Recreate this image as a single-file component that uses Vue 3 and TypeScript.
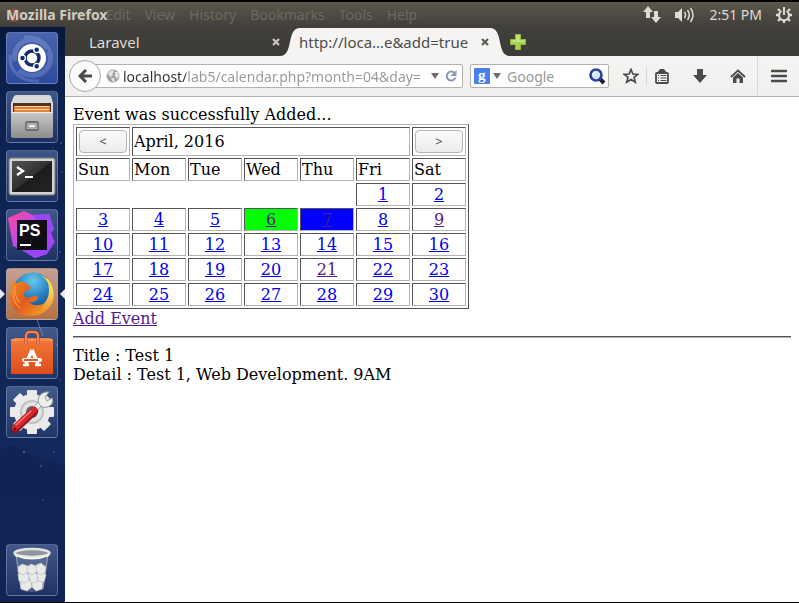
<script setup lang="ts">
import { ref } from 'vue'

interface Day {
  n: number
  visited?: boolean
  mark?: 'today' | 'event'
}

const menus: string[] = ['File', 'Edit', 'View', 'History', 'Bookmarks', 'Tools', 'Help']
const weekdays: string[] = ['Sun', 'Mon', 'Tue', 'Wed', 'Thu', 'Fri', 'Sat']

const day = (n: number): Day => ({
  n,
  visited: [6, 7, 9, 21].includes(n),
  mark: n === 6 ? 'today' : n === 7 ? 'event' : undefined,
})
const firstWeek: Day[] = [1, 2].map(day)
const weeks: Day[][] = [3, 10, 17, 24].map((s) => Array.from({ length: 7 }, (_, i) => day(s + i)))

const address = ref('localhost/lab5/calendar.php?month=04&day=')
const query = ref('')
</script>

<template>
  <div class="desktop">
    <header class="panel">
      <nav class="menus">
        <span class="ghost"></span>
        <a v-for="m in menus" :key="m" href="#" :class="{ under: m === 'File' }">{{ m }}</a>
      </nav>
      <strong class="app-title">Mozilla Firefox</strong>
      <div class="indicators">
        <svg width="18" height="17" viewBox="0 0 18 17" fill="#dfdbd2">
          <path d="M5 0 10 6H7V12H3V6H0ZM11 5H15V11H18L13 17 8 11H11Z" />
        </svg>
        <svg width="20" height="16" viewBox="0 0 20 16" fill="none" stroke="#dfdbd2" stroke-width="1.5">
          <path d="M0 5H3L7 1V15L3 11H0Z" fill="#dfdbd2" stroke="none" />
          <path d="M9.500 5Q11.500 8 9.500 11M12.500 3Q16 8 12.500 13M15.500 1Q20.500 8 15.500 15" />
        </svg>
        <time>2:51 PM</time>
        <svg width="16" height="16" viewBox="0 0 16 16" fill="none" stroke="#dfdbd2">
          <path d="M5.500 4A5 5 0 1 0 10.500 4" stroke-width="2" />
          <path d="M8 0V8" stroke-width="2" />
          <path d="M2 2 4 4M14 2 12 4M0 8H3M16 8H13M2 14 4 12M14 14 12 12M8 13V16" stroke-width="2.400" />
        </svg>
      </div>
    </header>

    <div class="workspace">
      <aside class="launcher">
        <svg class="stars" viewBox="0 0 65 575" preserveAspectRatio="none" aria-hidden="true">
          <path d="M0 425Q8 416 18 421T40 432L65 439V575H0Z" fill="#101f4d" opacity=".6" />
          <path d="M36 290 43 309" stroke="#8ba0d0" opacity=".6" />
          <g fill="#9db2e2" opacity=".6">
            <circle cx="61" cy="116" r=".8" /><circle cx="53" cy="121" r=".6" /><circle cx="62" cy="145" r=".7" />
            <circle cx="60" cy="225" r=".7" /><circle cx="4" cy="230" r=".5" /><circle cx="57" cy="318" r=".8" />
            <circle cx="60" cy="353" r=".6" /><circle cx="24" cy="425" r=".9" /><circle cx="54" cy="425" r=".7" />
            <circle cx="41" cy="439" r=".8" /><circle cx="43" cy="473" r=".6" />
          </g>
        </svg>

        <button class="tile dash" aria-label="Dash">
          <svg viewBox="0 0 52 52">
            <g fill="none" stroke="#c3d0ff" opacity=".22" stroke-width="5">
              <path d="M9 29C5 8 31 0 42 17M43 20C50 39 27 51 13 38" />
              <path d="M18 5C35 3 49 16 44 32M33 49C18 50 3 42 4 23" stroke-width="3" />
            </g>
            <circle cx="26" cy="26" r="14" fill="#fff" />
            <circle cx="26" cy="26" r="7" fill="none" stroke="#142c6c" stroke-width="3.500" />
            <g fill="#142c6c" stroke="#fff" stroke-width="1.300">
              <circle cx="16.500" cy="26" r="2.900" /><circle cx="30.700" cy="17.800" r="2.900" /><circle cx="30.700" cy="34.200" r="2.900" />
            </g>
          </svg>
        </button>

        <button class="tile" aria-label="Files">
          <svg viewBox="0 0 52 52">
            <defs>
              <linearGradient id="cab" x2="0" y2="1"><stop stop-color="#c9c9c9" /><stop offset="1" stop-color="#8d8d8d" /></linearGradient>
            </defs>
            <path d="M5 12 8 5Q9 4 11 4H42Q44 4 45 5L47 12V46H5Z" fill="#d9d9d9" />
            <rect x="7" y="12" width="38" height="10" fill="#51311f" />
            <path d="M8 15H44V22H8Z" fill="#df8137" />
            <path d="M9 15.500H43M9 18.500H43" stroke="#ffd39d" />
            <path d="M5 21H47V44Q47 47 44 47H8Q5 47 5 44Z" fill="url(#cab)" />
            <path d="M5 21.500H47" stroke="#eee" />
            <rect x="20" y="31" width="12" height="8" rx="1" fill="#ddd" stroke="#555" stroke-width="1.300" />
            <rect x="22" y="33" width="8" height="4" fill="#eee" stroke="#777" />
          </svg>
        </button>

        <button class="tile" aria-label="Terminal">
          <svg viewBox="0 0 52 52">
            <defs>
              <linearGradient id="term" x2="1" y2="1"><stop stop-color="#555" /><stop offset=".5" stop-color="#303030" /><stop offset=".51" stop-color="#1c1c1c" /><stop offset="1" stop-color="#252525" /></linearGradient>
            </defs>
            <rect x="3" y="8" width="46" height="37" rx="2" fill="#d3d3d3" stroke="#777" />
            <rect x="6" y="11" width="40" height="31" fill="url(#term)" />
            <path d="M11 17 17 21 11 25" fill="none" stroke="#fff" stroke-width="2.300" />
            <path d="M19 27H27" stroke="#fff" stroke-width="2" />
          </svg>
        </button>

        <button class="tile" aria-label="PhpStorm">
          <svg viewBox="0 0 52 52">
            <defs>
              <linearGradient id="ps" x2="1" y2="1"><stop stop-color="#ff4596" /><stop offset=".4" stop-color="#c34be8" /><stop offset="1" stop-color="#8b3fff" /></linearGradient>
            </defs>
            <path d="M2 9 18 2 27 6 43 5 48 20 45 24 49 33 41 45 29 49 16 41 7 37Z" fill="url(#ps)" />
            <path d="M27 6 43 5 48 20 40 30ZM41 45 29 49 16 41 40 36Z" fill="#9a45fb" />
            <rect x="11" y="11" width="30" height="30" fill="#100d14" />
            <text x="13" y="27" class="ps-text">PS</text>
            <path d="M14 36H25" stroke="#fff" stroke-width="2" />
          </svg>
        </button>

        <button class="tile fox" aria-label="Firefox">
          <svg viewBox="0 0 52 52">
            <defs>
              <radialGradient id="globe" cx=".5" cy=".2" r=".8"><stop stop-color="#65c9ed" /><stop offset=".55" stop-color="#237bbd" /><stop offset="1" stop-color="#173d7b" /></radialGradient>
              <linearGradient id="fur" x2="1" y2="1"><stop stop-color="#f18a25" /><stop offset=".5" stop-color="#e25a1e" /><stop offset="1" stop-color="#f3a328" /></linearGradient>
              <linearGradient id="tail" x2="0" y2="1"><stop stop-color="#fff17a" /><stop offset="1" stop-color="#ee8b20" /></linearGradient>
            </defs>
            <circle cx="27" cy="25" r="20.500" fill="url(#globe)" />
            <path d="M42 11C50 20 50 34 41 42C33 49 24 49 17 45L24 41C36 41 43 33 43 22Z" fill="url(#tail)" />
            <path d="M8 12Q9 15 11 15Q15 12 20 15L23 18 25 19Q24 22 20 23 17 25 18 28Q21 31 25 29 30 26 32 30 29 35 23 34 29 40 39 35 34 47 23 48C10 48 2 36 5 25Q5 17 8 12Z" fill="url(#fur)" />
            <path d="M7 22Q6 34 14 40M9 18Q8 28 14 35" fill="none" stroke="#f9ad45" stroke-width="1.200" opacity=".7" />
            <path d="M34 7Q46 14 44 29 49 19 42 11Z" fill="#fbd449" />
          </svg>
        </button>

        <button class="tile" aria-label="Software Center">
          <svg viewBox="0 0 52 52">
            <defs>
              <linearGradient id="bag" x2="0" y2="1"><stop stop-color="#f47a38" /><stop offset="1" stop-color="#dd4d1b" /></linearGradient>
            </defs>
            <path d="M5 13 9 11H44L47 13V47H5Z" fill="url(#bag)" />
            <path d="M5 13H47" stroke="#ffad7c" />
            <path d="M20 17V9Q20 5 24 5H28Q32 5 32 9V17" fill="none" stroke="#b94018" stroke-width="3" />
            <path d="M20 17V9Q20 5 24 5H28Q32 5 32 9V17" fill="none" stroke="#f79b70" stroke-width="1.500" />
            <path d="M26 23 20 37M26 23 32 37" stroke="#fff" stroke-width="3.500" />
            <path d="M17 38H23M29 38H35" stroke="#fff" stroke-width="2.500" />
            <path d="M18 33H34" stroke="#fff" stroke-width="4" stroke-linecap="round" />
            <path d="M18 33H32" stroke="#e55b22" stroke-width="2" />
          </svg>
        </button>

        <button class="tile" aria-label="System Settings">
          <svg viewBox="0 0 52 52">
            <g transform="translate(26 26)">
              <g fill="#eaeaea">
                <rect v-for="a in 4" :key="a" x="-5" y="-22" width="10" height="44" rx="1" :transform="`rotate(${(a - 1) * 45})`" />
                <circle r="18" />
              </g>
              <circle r="12" fill="#c1c1c1" /><circle r="10" fill="#e4e4e4" /><circle r="6" fill="#59627b" />
            </g>
            <path d="M18 34 36 16" stroke="#aaa" stroke-width="6" />
            <path d="M19 33 36 16" stroke="#eee" stroke-width="4" />
            <path d="M33 18C30 11 36 5 43 6L39 11 41 15 46 12C49 17 43 23 36 21Z" fill="#eee" stroke="#999" />
            <path d="M9 43 28 25" stroke="#8e1015" stroke-width="8" stroke-linecap="round" />
            <path d="M9 42 28 24" stroke="#d9282c" stroke-width="6" stroke-linecap="round" />
            <path d="M10 39 25 25" stroke="#f5797a" stroke-width="1.500" stroke-linecap="round" />
            <circle cx="9" cy="43" r="1.500" fill="#5d0c10" />
          </svg>
        </button>

        <button class="tile trash" aria-label="Trash">
          <svg viewBox="0 0 52 52">
            <path d="M9 9 15 46Q26 50 37 46L43 9Z" fill="#8d9ab5" opacity=".35" />
            <path d="M10 10 15 45M42 10 37 45" stroke="#c9d0de" opacity=".6" />
            <g fill="#e9eae7" stroke="#b9bdbe" stroke-width=".7">
              <path d="M14 38 19 34 25 37 26 43 21 47 15 45Z" /><path d="M26 37 32 34 37 38 36 45 30 47 26 43Z" />
              <path d="M12 30 17 27 23 30 23 36 18 39 13 37Z" /><path d="M22 31 27 27 32 31 31 38 25 39Z" /><path d="M31 29 36 27 40 31 38 38 32 37Z" />
              <path d="M12 23 16 20 22 22 22 28 17 31 12 28Z" /><path d="M21 23 25 20 30 22 31 28 26 31 21 28Z" /><path d="M30 21 35 19 40 23 39 29 34 31 30 27Z" />
            </g>
            <ellipse cx="26" cy="9" rx="17.500" ry="4" fill="#8f959c" stroke="#e2e2de" stroke-width="2.500" />
            <path d="M9 11Q26 18 43 11" fill="none" stroke="#f4f4f0" stroke-width="2" />
          </svg>
        </button>
      </aside>

      <main class="browser">
        <div class="tabs">
          <div class="tab">
            <a href="#">Laravel</a>
            <button class="close" aria-label="Close tab">
              <svg width="8" height="8" viewBox="0 0 8 8"><path d="M1 1 7 7M7 1 1 7" stroke="#ccc8c0" stroke-width="2.200" /></svg>
            </button>
          </div>
          <div class="tab active">
            <svg class="shape" viewBox="0 0 230 28" preserveAspectRatio="none">
              <path d="M0 28C14 28 6 0 20 0H210C224 0 216 28 230 28Z" fill="#f5f4f2" />
            </svg>
            <a href="#">http://loca…e&amp;add=true</a>
            <button class="close" aria-label="Close tab">
              <svg width="8" height="8" viewBox="0 0 8 8"><path d="M1 1 7 7M7 1 1 7" stroke="#5c5b58" stroke-width="2.200" /></svg>
            </button>
          </div>
          <button class="new-tab" aria-label="New tab">
            <svg width="16" height="16" viewBox="0 0 16 16">
              <path d="M5.500.5H10.500V5.500H15.500V10.500H10.500V15.500H5.500V10.500H.5V5.500H5.500Z" fill="#a9d24c" stroke="#8fbf3a" />
              <path d="M6.500 1.500H9.500V6.500H14.500V8H1.500V6.500H6.500Z" fill="#c9e488" />
            </svg>
          </button>
        </div>

        <div class="toolbar">
          <button class="back" aria-label="Back">
            <svg width="14" height="14" viewBox="0 0 14 14" fill="none" stroke="#4b4b49" stroke-width="3"><path d="M8 1 2 7 8 13M2 7H14" /></svg>
          </button>
          <div class="field location">
            <svg width="14" height="14" viewBox="0 0 14 14">
              <circle cx="7" cy="7" r="6.500" fill="#a1a1a1" />
              <path d="M1 5 4 2 7 1 8 3 6 5 7 7 4 8 3 6ZM9 3 12 3 13 7 11 10 9 7ZM5 9 8 9 9 12 7 13Z" fill="#e3e3e3" />
            </svg>
            <input v-model="address" class="address" type="text" aria-label="Address" />
            <svg width="8" height="6" viewBox="0 0 8 6"><path d="M0 0H8L4 6Z" fill="#6e6e6e" /></svg>
            <button class="reload" aria-label="Reload">
              <svg width="12" height="12" viewBox="0 0 12 12"><path d="M9 2.500A4.500 4.500 0 1 0 10.500 7.500" fill="none" stroke="#8799b3" stroke-width="2" /><path d="M11.500 0V6H5.500Z" fill="#8799b3" /></svg>
            </button>
          </div>
          <div class="field search">
            <svg width="16" height="16" viewBox="0 0 16 16">
              <rect width="16" height="16" rx="1" fill="#4a7ff0" />
              <text x="4" y="12" class="g-text">g</text>
            </svg>
            <svg width="8" height="6" viewBox="0 0 8 6"><path d="M0 0H8L4 6Z" fill="#6e6e6e" /></svg>
            <input v-model="query" type="text" placeholder="Google" aria-label="Search" />
            <button aria-label="Go">
              <svg width="17" height="17" viewBox="0 0 17 17">
                <path d="M11 11 15 15" stroke="#222" stroke-width="4" />
                <circle cx="7" cy="7" r="5.500" fill="#d7e6fb" stroke="#2c3f9c" stroke-width="2.600" />
                <path d="M4.500 6.500Q5 4.500 7 4.500" fill="none" stroke="#fff" />
              </svg>
            </button>
          </div>
          <button class="tool star" aria-label="Bookmark">
            <svg width="16" height="16" viewBox="0 0 16 16"><path d="M8 1.500 9.900 6 14.800 6.300 11 9.400 12.300 14.200 8 11.600 3.700 14.200 5 9.400 1.200 6.300 6.100 6Z" fill="none" stroke="#4b4b49" stroke-width="1.700" /></svg>
          </button>
          <button class="tool list" aria-label="Bookmarks list">
            <svg width="14" height="15" viewBox="0 0 14 15" fill="none" stroke="#4b4b49">
              <rect x="1" y="4" width="12" height="10" rx="1" stroke-width="1.800" />
              <path d="M3 3.500 5 0.500H9L11 3.500Z" fill="#4b4b49" />
              <path d="M3 6.500H4M5.500 6.500H11.500M3 9H4M5.500 9H11.500M3 11.500H4M5.500 11.500H11.500" stroke-width="1" />
            </svg>
          </button>
          <button class="tool" aria-label="Downloads">
            <svg width="14" height="14" viewBox="0 0 14 14"><path d="M4 0H10V6H14L7 14 0 6H4Z" fill="#4b4b49" /></svg>
          </button>
          <button class="tool" aria-label="Home">
            <svg width="16" height="15" viewBox="0 0 16 15"><path d="M1 8 8 1.500 15 8" fill="none" stroke="#4b4b49" stroke-width="1.800" /><path d="M3 8.500 8 4 13 8.500V14H9.500V9.500H6.500V14H3Z" fill="#4b4b49" /></svg>
          </button>
          <button class="tool menu" aria-label="Menu">
            <svg width="16" height="14" viewBox="0 0 16 14"><path d="M1 2H15M1 7H15M1 12H15" stroke="#4b4b49" stroke-width="2.600" stroke-linecap="round" /></svg>
          </button>
        </div>

        <section class="page">
          <div>Event was successfully Added...</div>
          <table class="calendar">
            <tbody>
              <tr>
                <td><button class="step" aria-label="Previous month">&lt;</button></td>
                <td colspan="5">April, 2016</td>
                <td><button class="step" aria-label="Next month">&gt;</button></td>
              </tr>
              <tr>
                <td v-for="w in weekdays" :key="w">{{ w }}</td>
              </tr>
              <tr>
                <td colspan="5" class="blank"></td>
                <td v-for="d in firstWeek" :key="d.n" class="day"><a href="#">{{ d.n }}</a></td>
              </tr>
              <tr v-for="(week, i) in weeks" :key="i">
                <td v-for="d in week" :key="d.n" :class="['day', d.mark]">
                  <a href="#" :class="{ visited: d.visited }">{{ d.n }}</a>
                </td>
              </tr>
            </tbody>
          </table>
          <a href="#" class="visited">Add Event</a>
          <hr />
          <div>Title : Test 1</div>
          <div>Detail : Test 1, Web Development. 9AM</div>
        </section>
      </main>
    </div>
  </div>
</template>

<style>
body {
  background: #fff;
}
</style>

<style scoped>
* {
  box-sizing: border-box;
}
svg {
  display: block;
  flex: none;
}
button {
  padding: 0;
  border: 0;
  background: none;
  font: inherit;
}
.desktop {
  display: flex;
  flex-direction: column;
  min-height: 100vh;
  border-top: 2px solid #000;
  border-bottom: 1px solid #000;
  font-family: "Noto Sans", "Open Sans", sans-serif;
  font-size: 14px;
  line-height: 20px;
}
.panel {
  position: relative;
  display: flex;
  align-items: center;
  justify-content: space-between;
  height: 25px;
  padding: 0 7px;
  background: linear-gradient(#5b574d, #413f3a);
}
.menus {
  display: flex;
  align-items: center;
  gap: 14px;
}
.menus a {
  color: #6d685e;
  text-decoration: none;
}
.menus .under {
  margin-left: 48px;
  opacity: 0.5;
}
.ghost {
  width: 14px;
  height: 14px;
  margin-right: -14px;
  border-radius: 50%;
  background: #84503f;
}
.app-title {
  position: absolute;
  left: 6px;
  font-size: 14px;
  color: #d0ccc3;
}
.indicators {
  display: flex;
  align-items: center;
  gap: 14px;
  color: #dfdbd2;
}
.workspace {
  flex: 1;
  display: flex;
}
.launcher {
  position: relative;
  display: flex;
  flex-direction: column;
  gap: 7px;
  width: 65px;
  padding: 5px 6px 6px;
  background: linear-gradient(#06183b, #0d2250 12%, #122859 70%, #152a66);
}
.stars {
  position: absolute;
  inset: 0;
  width: 100%;
  height: 100%;
}
.tile {
  position: relative;
  width: 52px;
  height: 52px;
  border: 1px solid rgba(160, 178, 215, 0.4);
  border-radius: 4px;
  background: linear-gradient(rgba(140, 165, 215, 0.4), rgba(90, 115, 165, 0.2));
}
.tile svg {
  width: 52px;
  height: 52px;
  margin: -1px;
}
.dash {
  background: linear-gradient(#4a64ad, #2e4c9f);
}
.fox {
  background: linear-gradient(#c4a193, #b5713f);
}
.fox::before,
.fox::after {
  content: "";
  position: absolute;
  top: 20px;
  border: 5px solid transparent;
}
.fox::before {
  left: -7px;
  border-left-color: #e8e8ec;
  border-right-width: 0;
}
.fox::after {
  right: -8px;
  border-right-color: #e8e8ec;
  border-left-width: 0;
}
.trash {
  margin-top: auto;
}
.ps-text {
  font: bold 16px "Liberation Sans", sans-serif;
  fill: #fff;
}
.g-text {
  font: bold 15px "Liberation Serif", serif;
  fill: #fff;
}
.browser {
  flex: 1;
  min-width: 0;
}
.tabs {
  display: flex;
  align-items: center;
  height: 29px;
  background: linear-gradient(#413f3a, #3c3b37);
}
.tab {
  position: relative;
  display: flex;
  align-items: center;
  justify-content: space-between;
  width: 215px;
  height: 29px;
  padding-left: 24px;
  font-size: 15px;
}
.tab a {
  color: #dfdbd2;
  text-decoration: none;
}
.active {
  width: 230px;
  padding: 0 21px 0 19px;
}
.active a {
  position: relative;
  color: #4c4c4c;
}
.shape {
  position: absolute;
  left: 0;
  bottom: 0;
  width: 100%;
  height: 28px;
}
.close {
  position: relative;
}
.toolbar {
  display: flex;
  align-items: center;
  height: 41px;
  padding-left: 4px;
  border-bottom: 1px solid #b3b1ae;
  background: linear-gradient(#f5f4f2, #f1f0ee);
}
.back {
  position: relative;
  display: grid;
  place-items: center;
  width: 32px;
  height: 32px;
  margin-right: -16px;
  border: 1px solid #a9a8a6;
  border-radius: 50%;
  background: #fafafa;
}
.field {
  display: flex;
  align-items: center;
  height: 24px;
  border: 1px solid #b3b1ae;
  border-radius: 2px;
  background: #fff;
}
.field input {
  flex: 1;
  min-width: 0;
  height: 22px;
  padding: 0;
  border: 0;
  outline: 0;
  background: none;
  color: #4c4c4c;
  font: inherit;
}
.field input::placeholder {
  color: #999;
}
.location {
  flex: 1;
  min-width: 0;
  margin-right: 7px;
  padding: 0 5px 0 20px;
}
.location .address {
  margin: 0 6px 0 3px;
  background: linear-gradient(90deg, #303030 63px, #989898 63px);
  background-clip: text;
  -webkit-background-clip: text;
  -webkit-text-fill-color: transparent;
}
.reload {
  margin-left: 6px;
}
.search {
  width: 139px;
  padding: 0 2px 0 3px;
}
.search input {
  margin-left: 6px;
}
.search svg + svg {
  margin-left: 3px;
}
.tool {
  display: grid;
  place-items: center;
  width: 38px;
  height: 40px;
}
.star {
  width: 30px;
  margin-left: 7px;
}
.list {
  width: 35px;
  height: 18px;
  padding-right: 4px;
  border-left: 1px solid #d5d4d2;
}
.menu {
  width: 42px;
  border-left: 1px solid #dddcda;
}
.page {
  padding: 8px;
  font-family: "DejaVu Serif", serif;
  font-size: 16px;
  line-height: 19px;
  color: #000;
}
.page a {
  color: #0000ee;
}
.page a.visited {
  color: #551a8b;
}
.calendar {
  border: 1px solid;
  border-color: #b4b4b4 #555 #555 #b4b4b4;
  border-collapse: separate;
  border-spacing: 2px;
}
.calendar td {
  min-width: 54px;
  height: 23px;
  padding: 1px;
  border: 1px solid;
  border-color: #555 #b4b4b4 #b4b4b4 #555;
}
.calendar .blank {
  border: 0;
}
.day {
  text-align: center;
}
.calendar .today {
  background: #00ff00;
}
.calendar .event {
  background: #0000ff;
}
.step {
  display: block;
  width: 48px;
  height: 23px;
  margin: 1px;
  border: 1px solid #b5b5b5;
  border-radius: 4px;
  background: linear-gradient(#fcfcfc, #ebebeb);
  color: #4c4c4c;
  font-family: "Noto Sans", sans-serif;
  font-size: 13px;
}
hr {
  height: 2px;
  margin: 8px 0;
  border: 0;
  border-top: 1px solid #555;
  border-bottom: 1px solid #b4b4b4;
}
</style>
